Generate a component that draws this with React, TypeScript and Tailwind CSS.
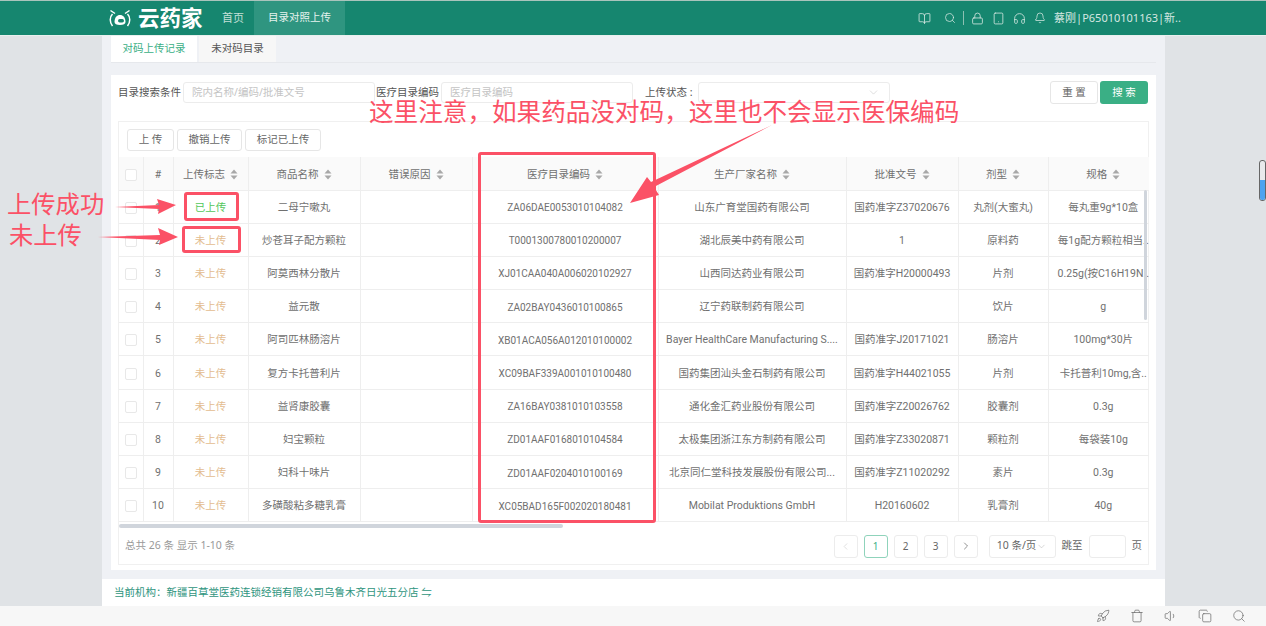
import { Bell, BookOpen, ChevronDown, ChevronLeft, ChevronRight, Copy, Headphones, Lock, Rocket, Search, Tablet, Trash, Volume1 } from "lucide-react";

const rows = [
  ["1", "已上传", "二母宁嗽丸", "ZA06DAE0053010104082", "山东广育堂国药有限公司", "国药准字Z37020676", "丸剂(大蜜丸)", "每丸重9g*10盒"],
  ["2", "未上传", "炒苍耳子配方颗粒", "T0001300780010200007", "湖北辰美中药有限公司", "1", "原料药", "每1g配方颗粒相当.."],
  ["3", "未上传", "阿莫西林分散片", "XJ01CAA040A006020102927", "山西同达药业有限公司", "国药准字H20000493", "片剂", "0.25g(按C16H19N.."],
  ["4", "未上传", "益元散", "ZA02BAY0436010100865", "辽宁药联制药有限公司", "", "饮片", "g"],
  ["5", "未上传", "阿司匹林肠溶片", "XB01ACA056A012010100002", "Bayer HealthCare Manufacturing S....", "国药准字J20171021", "肠溶片", "100mg*30片"],
  ["6", "未上传", "复方卡托普利片", "XC09BAF339A001010100480", "国药集团汕头金石制药有限公司", "国药准字H44021055", "片剂", "卡托普利10mg,含.."],
  ["7", "未上传", "益肾康胶囊", "ZA16BAY0381010103558", "通化金汇药业股份有限公司", "国药准字Z20026762", "胶囊剂", "0.3g"],
  ["8", "未上传", "妇宝颗粒", "ZD01AAF0168010104584", "太极集团浙江东方制药有限公司", "国药准字Z33020871", "颗粒剂", "每袋装10g"],
  ["9", "未上传", "妇科十味片", "ZD01AAF0204010100169", "北京同仁堂科技发展股份有限公司...", "国药准字Z11020292", "素片", "0.3g"],
  ["10", "未上传", "多磺酸粘多糖乳膏", "XC05BAD165F002020180481", "Mobilat Produktions GmbH", "H20160602", "乳膏剂", "40g"],
];

const headers = ["上传标志", "商品名称", "错误原因", "医疗目录编码", "生产厂家名称", "批准文号", "剂型", "规格"];

const SortIcon = () => (
  <svg width="8" height="11" viewBox="0 0 8 11" className="ml-[5px] shrink-0 fill-[#a8a8a8]">
    <path d="M4 0.5 7.5 4.5H0.5Z" />
    <path d="M4 10.5 0.5 6.5H7.5Z" />
  </svg>
);

const Logo = () => (
  <svg width="24" height="20" viewBox="0 0 24 20" fill="none" stroke="#fff" strokeWidth="1.5" className="shrink-0">
    <path d="M4.500 6C1.500 9 1.500 14 4.500 18" />
    <path d="M19.500 6C22.500 9 22.500 14 19.500 18" />
    <path d="M2.500 2.500 7 5.500M21.500 2.500 17 5.500" />
    <path d="M6.500 14C6.500 9.500 9 7 12 7s5.500 2.500 5.500 7c0 2-2 3-5.500 3S6.500 16 6.500 14Z" fill="#fff" stroke="none" />
    <rect x="10" y="11" width="6" height="3.500" rx="1.700" fill="#16866f" stroke="none" />
  </svg>
);

const PageBtn = ({ children, active }: { children: React.ReactNode; active?: boolean }) => (
  <div className={`flex h-[23px] w-[24px] items-center justify-center rounded-[3px] border text-[10px] ${active ? "border-[#8fd3bb] text-[#3aaf85]" : "border-[#ececec] text-[#666]"}`}>
    {children}
  </div>
);

const Btn = ({ label, w }: { label: string; w: string }) => (
  <button className={`h-[22px] ${w} rounded-[3px] border border-[#e6e6e6] bg-white text-[10.500px] text-[#666]`}>{label}</button>
);

const Arrow = ({ className, points, vb }: { className: string; points: string; vb: string }) => (
  <svg viewBox={vb} className={`absolute fill-[#fb5166] ${className}`}>
    <polygon points={points} />
  </svg>
);

export default function App() {
  return (
    <div className="relative flex h-[626px] w-[1266px] flex-col overflow-hidden bg-[#e0e3e6] text-[#707070] [font-family:'Noto_Sans','Noto_Sans_CJK_SC',sans-serif]">
      {/* top bar */}
      <header className="flex h-[36px] shrink-0 items-center border-t border-b border-t-[#a9c4bc] border-b-[#e8f0ee] bg-[#16866f] pl-[108px] pr-[85px] text-white">
        <Logo />
        <span className="ml-[6px] w-[84px] text-[21.500px] leading-none font-bold">云药家</span>
        <span className="w-[32px] text-[11px] text-[#c4e0d8]">首页</span>
        <div className="flex h-full w-[91px] items-center justify-center bg-[#2f9580] text-[10.500px] text-[#e6f3ef]">目录对照上传</div>
        <div className="ml-auto flex items-center text-[#d5e8e2]">
          <BookOpen size={13} strokeWidth={1.500} />
          <Search size={12} strokeWidth={1.500} className="ml-[13px]" />
          <div className="ml-[7px] h-[14px] w-px bg-[#8cc0b2]" />
          <Lock size={13} strokeWidth={1.500} className="ml-[7px]" />
          <Tablet size={13} strokeWidth={1.500} className="ml-[8px]" />
          <Headphones size={13} strokeWidth={1.500} className="ml-[8px]" />
          <Bell size={12} strokeWidth={1.500} className="ml-[8px]" />
          <span className="ml-[8px] text-[11px] whitespace-nowrap">蔡刚|P65010101163|新..</span>
        </div>
      </header>

      {/* page column */}
      <div className="flex min-h-0 flex-1 pl-[102px] pr-[101px]">
        <main className="flex w-[1063px] flex-col bg-[#eff1f5]">
          <div className="mx-[9px] flex h-[27px] items-start gap-[2px] border-b border-[#e6e8ec]">
            <div className="flex h-[26px] w-[86px] items-center justify-center bg-white text-[10.500px] text-[#3aaf85]">对码上传记录</div>
            <div className="flex h-[26px] w-[77px] items-center justify-center bg-[#f7f7f7] text-[10.500px] text-[#555]">未对码目录</div>
          </div>

          <section className="mx-[9px] mt-[12px] flex h-[495px] flex-col bg-white px-[7px] pt-[7px]">
            {/* search row */}
            <div className="flex h-[21px] items-center text-[10.500px] text-[#555]">
              <span className="w-[65px] whitespace-nowrap">目录搜索条件</span>
              <div className="flex h-[21px] w-[192px] items-center rounded-[3px] border border-[#ececec] pl-[8px] text-[#c4c4c4]">院内名称/编码/批准文号</div>
              <span className="ml-[1px] w-[65px] whitespace-nowrap">医疗目录编码</span>
              <div className="flex h-[21px] w-[192px] items-center rounded-[3px] border border-[#ececec] pl-[8px] text-[#c4c4c4]">医疗目录编码</div>
              <span className="ml-[12px] w-[53px] whitespace-nowrap">上传状态 :</span>
              <div className="flex h-[21px] w-[192px] items-center justify-end rounded-[3px] border border-[#ececec] pr-[9px] text-[#c4c4c4]">
                <ChevronDown size={13} strokeWidth={1} />
              </div>
              <button className="ml-auto h-[23px] w-[48px] rounded-[3px] border border-[#e6e6e6] text-[10.500px] text-[#666]">重 置</button>
              <button className="ml-[2px] mr-[1px] h-[23px] w-[48px] rounded-[3px] bg-[#3aaf85] text-[10.500px] text-white">搜 索</button>
            </div>

            {/* table box */}
            <div className="relative mt-[18px] flex h-[444px] w-[1031px] flex-col border border-[#f0f0f0]">
              <div className="flex h-[35px] shrink-0 items-center gap-[3px] pl-[8px]">
                <Btn label="上 传" w="w-[47px]" />
                <Btn label="撤销上传" w="w-[65px]" />
                <Btn label="标记已上传" w="w-[76px]" />
              </div>
              <div className="w-[1030px] shrink-0 overflow-hidden">
                <table className="w-[1039px] table-fixed border-collapse text-center text-[10.500px] [font-family:'Roboto','Noto_Sans_CJK_SC',sans-serif]">
                  <colgroup>
                    <col className="w-[24px]" />
                    <col className="w-[30px]" />
                    <col className="w-[75px]" />
                    <col className="w-[112px]" />
                    <col className="w-[112px]" />
                    <col className="w-[186px]" />
                    <col className="w-[188px]" />
                    <col className="w-[112px]" />
                    <col className="w-[90px]" />
                    <col className="w-[110px]" />
                  </colgroup>
                  <thead>
                    <tr className="h-[33px] bg-[#fafafa] [&_th]:pt-[3px]">
                      <th className="border-r border-b border-[#eeeeee] font-normal">
                        <div className="mx-auto h-[12px] w-[12px] rounded-[2px] border border-[#e8e8e8] bg-white" />
                      </th>
                      <th className="border-r border-b border-[#eeeeee] font-normal">#</th>
                      {headers.map((h) => (
                        <th key={h} className="border-r border-b border-[#eeeeee] font-normal last:border-r-0">
                          <div className="flex items-center justify-center">
                            {h}
                            <SortIcon />
                          </div>
                        </th>
                      ))}
                    </tr>
                  </thead>
                  <tbody className="[&_td]:pt-[2px]">
                    {rows.map((r) => (
                      <tr key={r[0]} className="h-[33.200px]">
                        <td className="border-r border-b border-[#eeeeee]">
                          <div className="mx-auto h-[12px] w-[12px] rounded-[2px] border border-[#e8e8e8] bg-white" />
                        </td>
                        <td className="border-r border-b border-[#eeeeee]">{r[0]}</td>
                        <td className={`border-r border-b border-[#eeeeee] ${r[1] === "已上传" ? "text-[#52c75a]" : "text-[#e3bc90]"}`}>{r[1]}</td>
                        <td className="border-r border-b border-[#eeeeee]">{r[2]}</td>
                        <td className="border-r border-b border-[#eeeeee]"></td>
                        <td className="border-r border-b border-[#eeeeee] text-[10px]">{r[3]}</td>
                        <td className="overflow-hidden border-r border-b border-[#eeeeee] whitespace-nowrap">{r[4]}</td>
                        <td className="border-r border-b border-[#eeeeee] whitespace-nowrap">{r[5]}</td>
                        <td className="border-r border-b border-[#eeeeee]">{r[6]}</td>
                        <td className="overflow-hidden border-b border-[#eeeeee] whitespace-nowrap">{r[7]}</td>
                      </tr>
                    ))}
                  </tbody>
                </table>
              </div>
              <div className="mt-[2px] h-[4px] w-[444px] shrink-0 rounded-[2px] bg-[#d0d5dc]" />

              {/* pagination */}
              <div className="flex flex-1 items-center pl-[6px] pr-[6px] text-[10.500px] text-[#999]">
                <span>总共 26 条 显示 1-10 条</span>
                <div className="ml-auto flex items-center">
                  <PageBtn><ChevronLeft size={11} strokeWidth={1} className="text-[#bbb]" /></PageBtn>
                  <div className="ml-[6px]"><PageBtn active>1</PageBtn></div>
                  <div className="ml-[6px]"><PageBtn>2</PageBtn></div>
                  <div className="ml-[6px]"><PageBtn>3</PageBtn></div>
                  <div className="ml-[6px]"><PageBtn><ChevronRight size={12} strokeWidth={1.300} className="text-[#555]" /></PageBtn></div>
                  <div className="ml-[11px] flex h-[23px] w-[67px] items-center justify-center rounded-[3px] border border-[#ececec] text-[#666]">
                    10 条/页<ChevronDown size={11} strokeWidth={1} className="text-[#aaa]" />
                  </div>
                  <span className="ml-[6px] text-[#666]">跳至</span>
                  <div className="ml-[6px] h-[23px] w-[37px] rounded-[3px] border border-[#ececec]" />
                  <span className="ml-[6px] text-[#666]">页</span>
                </div>
              </div>

              {/* vertical table scrollbar */}
              <div className="absolute right-[1px] top-[68px] h-[130px] w-[3px] rounded-[2px] bg-[#d0d5dc]" />
            </div>
          </section>

          <div className="mt-[9px] flex h-[27px] items-center bg-white pl-[12px] text-[10.500px] text-[#2f9580]">
            当前机构：新疆百草堂医药连锁经销有限公司乌鲁木齐日光五分店 ⇋
          </div>
        </main>
      </div>

      {/* bottom tools */}
      <footer className="flex h-[20px] shrink-0 items-center justify-end gap-[20px] bg-[#f7f7f7] pr-[20px] text-[#666]">
        <Rocket size={14} strokeWidth={1.200} />
        <Trash size={14} strokeWidth={1.200} />
        <Volume1 size={14} strokeWidth={1.200} />
        <Copy size={14} strokeWidth={1.200} />
        <Search size={14} strokeWidth={1.200} />
      </footer>

      {/* page slider at the right edge */}
      <div className="absolute left-[1259px] top-[160px] h-[41px] w-[7px] overflow-hidden rounded-[3px] border border-[#666] bg-[#e8eaec]">
        <div className="mt-[19px] h-[22px] bg-[#4da3f0]" />
      </div>

      {/* annotations laid over the screenshot */}
      <div className="absolute left-[369px] top-[98px] whitespace-nowrap text-[24.600px] leading-[24px] text-[#fb5166] [font-family:'Noto_Sans_CJK_SC',sans-serif]">这里注意，如果药品没对码，这里也不会显示医保编码</div>
      <div className="absolute left-[7px] top-[190px] whitespace-nowrap text-[24.300px] leading-[26px] text-[#fb5166] [font-family:'Noto_Sans_CJK_SC',sans-serif]">上传成功</div>
      <div className="absolute left-[9px] top-[221px] whitespace-nowrap text-[24.300px] leading-[26px] text-[#fb5166] [font-family:'Noto_Sans_CJK_SC',sans-serif]">未上传</div>

      <div className="absolute left-[184px] top-[192px] h-[29px] w-[55px] rounded-[3px] border-[3px] border-[#fb5166]" />
      <div className="absolute left-[182px] top-[226px] h-[27px] w-[59px] rounded-[3px] border-[3px] border-[#fb5166]" />
      <div className="absolute left-[478px] top-[152px] h-[371px] w-[178px] rounded-[3px] border-[3px] border-[#fb5166]" />

      <Arrow className="left-[115px] top-[198px] h-[18px] w-[61px]" vb="0 0 61 18" points="0,9 44,7 42,1 61,7 43,16 44,11" />
      <Arrow className="left-[98px] top-[228px] h-[18px] w-[80px]" vb="0 0 80 18" points="0,9 62,7 60,0 80,9 61,17 62,12" />
      <Arrow className="left-[630px] top-[125px] h-[80px] w-[142px]" vb="0 0 142 80" points="142,0 24,62 29,70 0,78 17,52 21,57" />
    </div>
  );
}
